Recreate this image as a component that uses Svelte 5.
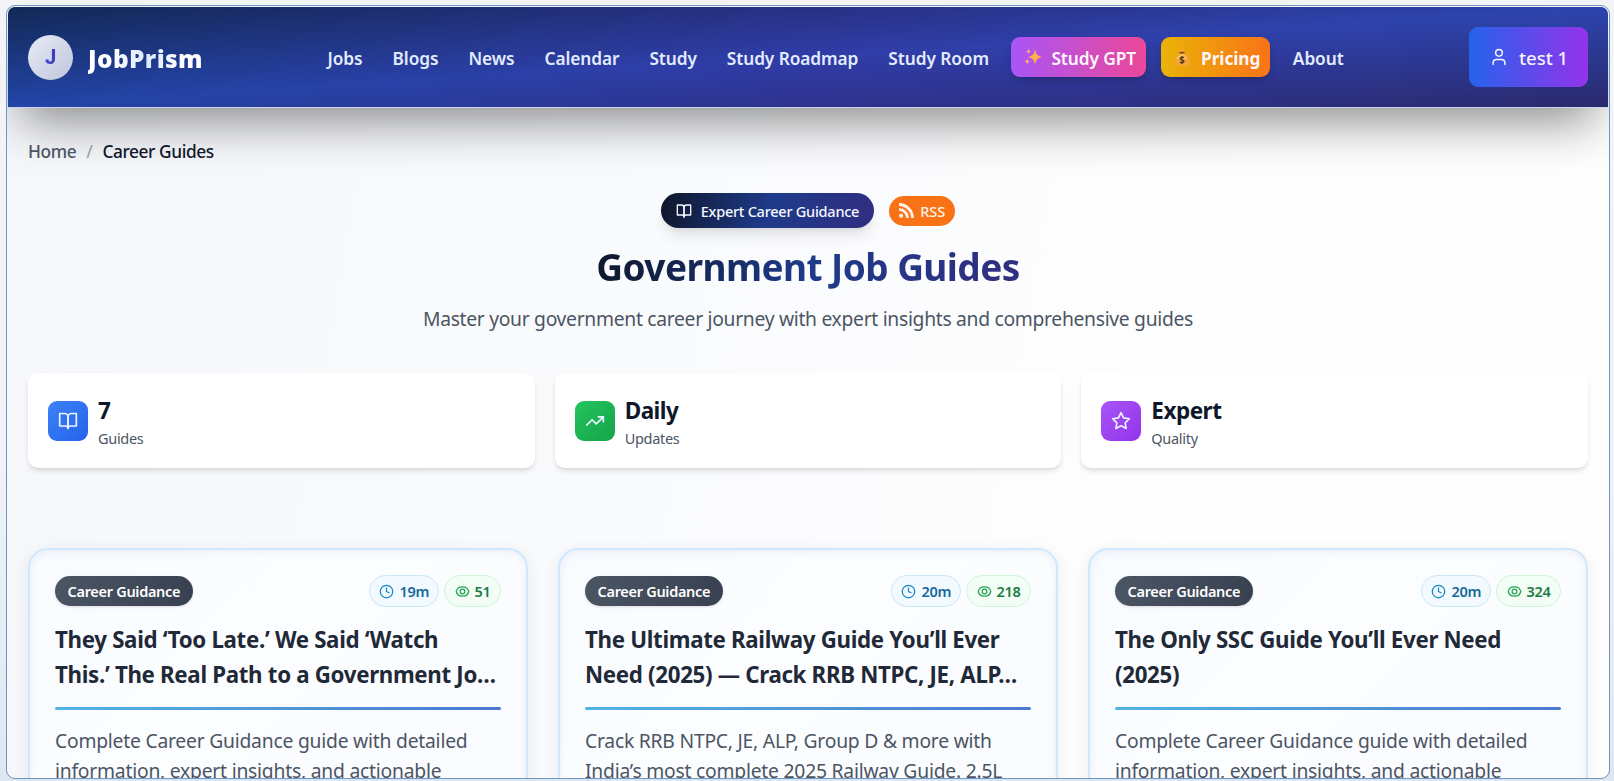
<script lang="ts">
  type Guide = {
    category: string;
    minutes: string;
    views: string;
    title: string[];
    summary: string[];
  };

  const navLinks = ['Jobs', 'Blogs', 'News', 'Calendar', 'Study', 'Study Roadmap', 'Study Room'];

  const stats = [
    { icon: 'book', tone: 'blue', value: '7', label: 'Guides' },
    { icon: 'trend', tone: 'green', value: 'Daily', label: 'Updates' },
    { icon: 'star', tone: 'purple', value: 'Expert', label: 'Quality' }
  ];

  const guides: Guide[] = [
    {
      category: 'Career Guidance',
      minutes: '19m',
      views: '51',
      title: ['They Said ‘Too Late.’ We Said ‘Watch', 'This.’ The Real Path to a Government Jo…'],
      summary: ['Complete Career Guidance guide with detailed', 'information, expert insights, and actionable']
    },
    {
      category: 'Career Guidance',
      minutes: '20m',
      views: '218',
      title: ['The Ultimate Railway Guide You’ll Ever', 'Need (2025) — Crack RRB NTPC, JE, ALP…'],
      summary: ['Crack RRB NTPC, JE, ALP, Group D & more with', 'India’s most complete 2025 Railway Guide. 2.5L']
    },
    {
      category: 'Career Guidance',
      minutes: '20m',
      views: '324',
      title: ['The Only SSC Guide You’ll Ever Need', '(2025)'],
      summary: ['Complete Career Guidance guide with detailed', 'information, expert insights, and actionable']
    }
  ];
</script>

{#snippet icon(name: string, size: number)}
  <svg class="icon" width={size} height={size} viewBox="0 0 24 24" aria-hidden="true">
    {#if name === 'book'}
      <path d="M2 3h6a4 4 0 0 1 4 4v14a3 3 0 0 0-3-3H2z" />
      <path d="M22 3h-6a4 4 0 0 0-4 4v14a3 3 0 0 1 3-3h7z" />
    {:else if name === 'trend'}
      <path d="M22 7l-8.500 8.500-5-5L2 17" />
      <path d="M16 7h6v6" />
    {:else if name === 'star'}
      <path d="M12 2l3.090 6.260L22 9.270l-5 4.870 1.180 6.880L12 17.770l-6.180 3.250L7 14.140 2 9.270l6.910-1.010z" />
    {:else if name === 'clock'}
      <circle cx="12" cy="12" r="10" />
      <path d="M12 6v6l4 2" />
    {:else if name === 'eye'}
      <path d="M2 12c1-4.500 5-7.500 10-7.500s9 3 10 7.500c-1 4.500-5 7.500-10 7.500S3 16.500 2 12z" />
      <circle cx="12" cy="12" r="3.800" />
    {:else if name === 'user'}
      <path d="M19 21v-2a4 4 0 0 0-4-4H9a4 4 0 0 0-4 4v2" />
      <circle cx="12" cy="7" r="4" />
    {/if}
  </svg>
{/snippet}

<div class="page">
  <div class="window">
    <header class="header">
      <a class="brand" href="/">
        <span class="brand-mark"><span>J</span></span>
        <span class="brand-name">JobPrism</span>
      </a>

      <nav class="nav" aria-label="Main">
        {#each navLinks as link}
          <a class="nav-link" href="/">{link}</a>
        {/each}
        <a class="nav-pill gpt" href="/">
          <svg width="18" height="18" viewBox="0 0 18 18" aria-hidden="true">
            <path fill="#ffb04a" d="M11 1c.8 5 2.300 6.800 7 8-4.700 1.200-6.200 3-7 8-.8-5-2.300-6.800-7-8 4.700-1.200 6.200-3 7-8z" />
            <path fill="#ffb56b" d="M4.500.5c.3 2 .9 2.700 2.700 3.100-1.800.4-2.400 1.100-2.700 3.100-.3-2-.9-2.700-2.700-3.100C3.600 3.200 4.200 2.500 4.500.5zM3.200 10.500c.4 2 1 2.700 2.900 3.100-1.900.4-2.500 1.100-2.900 3.100-.4-2-1-2.700-2.900-3.100 1.900-.4 2.500-1.100 2.900-3.100z" />
          </svg>
          <span>Study GPT</span>
        </a>
        <a class="nav-pill pricing" href="/">
          <svg width="16" height="18" viewBox="0 0 16 18" aria-hidden="true">
            <path fill="#f3a53b" d="M5.500 5.500h5c2.500 2 5 5.500 5 8.500 0 2.500-1.500 3.500-3.500 3.500H4C2 17.500.5 16.500.5 14c0-3 2.500-6.500 5-8.500z" />
            <path fill="#f9c05c" d="M6 6.500h4c2 1.500 3 3 3.500 4.500H2.500C3 9.500 4 8 6 6.500z" />
            <path fill="#7a4a1d" d="M5.500 3.800h5v1.700h-5z" />
            <path fill="#f6a53c" d="M5.500 1l1.500.8 1-.8 1 .8 1.500-.8-1 2.800h-3z" />
            <path fill="none" stroke="#5d3a1a" stroke-width="1.300" d="M10 9.800C9 8.700 6.200 8.900 6.200 10.500s3.800 1.200 3.800 2.800-2.900 1.900-4 .7M8 8v8" />
          </svg>
          <span>Pricing</span>
        </a>
        <a class="nav-link" href="/">About</a>
      </nav>

      <button class="user" type="button">
        {@render icon('user', 20)}
        <span>test 1</span>
      </button>
    </header>

    <main class="content">
      <div class="crumbs">
        <a href="/">Home</a>
        <span class="slash">/</span>
        <span class="current">Career Guides</span>
      </div>

      <section class="hero">
        <div class="hero-tags">
          <span class="hero-badge">
            {@render icon('book', 16)}
            <span>Expert Career Guidance</span>
          </span>
          <a class="rss" href="/">
            <svg width="15" height="15" viewBox="0 0 15 15" aria-hidden="true">
              <circle cx="2.200" cy="12.800" r="2.100" fill="currentColor" />
              <path fill="none" stroke="currentColor" stroke-width="2.800" d="M0 6.400A8.600 8.600 0 0 1 8.600 15M0 1.500A13.500 13.500 0 0 1 13.500 15" />
            </svg>
            <span>RSS</span>
          </a>
        </div>
        <h1>Government Job Guides</h1>
        <p>Master your government career journey with expert insights and comprehensive guides</p>
      </section>

      <section class="stats">
        {#each stats as stat}
          <div class="stat">
            <span class="stat-icon {stat.tone}">{@render icon(stat.icon, 20)}</span>
            <div class="stat-text">
              <strong>{stat.value}</strong>
              <span>{stat.label}</span>
            </div>
          </div>
        {/each}
      </section>

      <section class="guides">
        {#each guides as guide}
          <article class="guide">
            <div class="guide-meta">
              <span class="category">{guide.category}</span>
              <div class="counts">
                <span class="count time">{@render icon('clock', 15)}<span>{guide.minutes}</span></span>
                <span class="count views">{@render icon('eye', 15)}<span>{guide.views}</span></span>
              </div>
            </div>
            <h2>
              {#each guide.title as line}<span>{line}</span>{/each}
            </h2>
            <div class="rule"></div>
            <p>
              {#each guide.summary as line}<span>{line}</span>{/each}
            </p>
          </article>
        {/each}
      </section>
    </main>
  </div>
</div>

<style>
  :global(body) {
    font-family: 'Noto Sans', 'Open Sans', sans-serif;
    background: #f1f4f9;
  }

  .page {
    box-sizing: border-box;
    height: 781px;
    padding: 5px 4px 2px 6px;
    overflow: hidden;
    background: linear-gradient(#f3f4f8, #eff2f8 60%, #dde7f3);
  }

  .window {
    box-sizing: border-box;
    width: 1604px;
    height: 774px;
    padding: 1px;
    overflow: hidden;
    border: 1px solid #7396c0;
    border-radius: 9px;
    background: linear-gradient(100deg, #f5f7fa, #fafbfd 45%, #fefefe 75%);
  }

  a {
    color: inherit;
    text-decoration: none;
  }

  .icon {
    flex: none;
    fill: none;
    stroke: currentColor;
    stroke-width: 2;
    stroke-linecap: round;
    stroke-linejoin: round;
  }

  .header {
    position: relative;
    box-sizing: border-box;
    display: flex;
    align-items: center;
    height: 101px;
    padding: 0 20px;
    border-bottom: 1px solid #c9d3ee;
    border-radius: 7px 7px 0 0;
    color: #e3ebff;
    background:
      linear-gradient(to right, rgba(0, 66, 130, 0.22), rgba(58, 40, 145, 0.3) 50%, rgba(49, 60, 150, 0.12)),
      linear-gradient(to bottom right, #16224a, #2c46b2 50%, #292767);
    background-clip: padding-box;
    box-shadow: 0 25px 50px -12px rgba(0, 0, 0, 0.46);
  }

  .brand {
    display: flex;
    align-items: center;
    gap: 15px;
    width: 292px;
  }

  .brand-mark {
    display: grid;
    place-items: center;
    width: 45px;
    height: 45px;
    border-radius: 50%;
    background: linear-gradient(135deg, #e8ebf5, #bfc5dc);
    font-family: Roboto, sans-serif;
    font-size: 20px;
    font-weight: 800;
  }

  .brand-mark span {
    color: transparent;
    background: linear-gradient(100deg, #2f50d8, #4a35b5);
    background-clip: text;
  }

  .brand-name {
    padding-top: 2px;
    color: transparent;
    font-size: 24.500px;
    font-weight: 900;
    letter-spacing: 0.350px;
    background: linear-gradient(90deg, #fff 20%, #dbeafe 50%, #fff 85%);
    background-clip: text;
  }

  .nav {
    display: flex;
    align-items: center;
    gap: 15px;
    font-size: 17.300px;
    font-weight: 600;
    letter-spacing: -0.080px;
    white-space: nowrap;
  }

  .nav-link {
    padding: 2px 7.500px 0;
  }

  .nav-pill {
    display: flex;
    align-items: center;
    gap: 9px;
    height: 40px;
    padding: 0 10px 0 13px;
    border-radius: 9px;
    color: #fff5fb;
    box-shadow: 0 4px 8px -2px rgba(0, 0, 0, 0.25);
  }

  .nav-pill span {
    padding-top: 2px;
  }

  .gpt {
    background: linear-gradient(90deg, #a855f7, #ec4899);
  }

  .pricing {
    gap: 11px;
    font-weight: 700;
    background: linear-gradient(90deg, #eab308, #f97316);
  }

  .user {
    display: flex;
    align-items: center;
    gap: 10px;
    width: 119px;
    height: 60px;
    margin-left: auto;
    padding: 0 0 0 20px;
    border: 0;
    border-radius: 9px;
    color: #f4f3ff;
    background: linear-gradient(90deg, #2563eb, #9333ea);
    font-family: inherit;
    font-size: 18.500px;
    font-weight: 500;
    white-space: nowrap;
  }

  .user .icon {
    stroke-width: 1.800;
  }

  .content {
    padding: 30px 20px 0;
  }

  .crumbs {
    position: relative;
    display: flex;
    gap: 10px;
    height: 28px;
    line-height: 28px;
    color: #4b5563;
    font-size: 17.300px;
    font-weight: 500;
    letter-spacing: -0.400px;
  }

  .slash {
    color: #9ca3af;
  }

  .current {
    color: #0f172a;
  }

  .hero {
    display: flex;
    flex-direction: column;
    align-items: center;
    margin-top: 27px;
  }

  .hero-tags {
    display: flex;
    align-items: center;
    gap: 15px;
  }

  .hero-badge,
  .rss {
    display: flex;
    align-items: center;
    font-size: 14.500px;
    font-weight: 500;
    letter-spacing: -0.250px;
    white-space: nowrap;
  }

  .hero-badge {
    gap: 9px;
    height: 35px;
    padding: 0 15px;
    border-radius: 18px;
    color: #f5f8ff;
    background: linear-gradient(100deg, #0f172a, #1e3a8a 50%, #312e81);
    box-shadow: 0 10px 15px -3px rgba(0, 0, 0, 0.1), 0 4px 6px -4px rgba(0, 0, 0, 0.1);
  }

  .rss {
    gap: 6px;
    height: 30px;
    padding: 0 10px;
    border-radius: 15px;
    color: #fff3e8;
    background: #f97316;
    letter-spacing: 0;
  }

  h1 {
    margin: 16px 0 0;
    color: transparent;
    font-size: 37px;
    font-weight: 700;
    line-height: 46px;
    letter-spacing: -0.560px;
    white-space: nowrap;
    background: linear-gradient(100deg, #0f172a, #1e3a8a 50%, #312e81);
    background-clip: text;
  }

  .hero p {
    margin: 14px 0 0;
    color: #4b5563;
    font-size: 19.300px;
    line-height: 30px;
    letter-spacing: -0.300px;
    white-space: nowrap;
  }

  .stats {
    display: grid;
    grid-template-columns: repeat(3, 1fr);
    gap: 20px;
    margin-top: 39px;
  }

  .stat {
    box-sizing: border-box;
    display: flex;
    align-items: center;
    gap: 10px;
    height: 95px;
    padding: 1px 20px 0;
    border-radius: 10px;
    background: #fff;
    box-shadow: 0 4px 6px -1px rgba(0, 0, 0, 0.1), 0 2px 4px -2px rgba(0, 0, 0, 0.1);
  }

  .stat-icon {
    display: grid;
    place-items: center;
    width: 40px;
    height: 40px;
    border-radius: 9px;
    color: #edf4ff;
  }

  .blue {
    background: linear-gradient(135deg, #3b82f6, #2563eb);
  }

  .green {
    background: linear-gradient(135deg, #22c55e, #16a34a);
  }

  .purple {
    background: linear-gradient(135deg, #a855f7, #9333ea);
  }

  .stat-text {
    display: flex;
    flex-direction: column;
    padding-top: 2px;
  }

  .stat-text strong {
    color: #0f172a;
    font-size: 22.500px;
    font-weight: 700;
    line-height: 32px;
    letter-spacing: -0.500px;
  }

  .stat-text span {
    color: #4b5563;
    font-size: 14.500px;
    line-height: 23px;
    letter-spacing: -0.300px;
  }

  .guides {
    display: grid;
    grid-template-columns: repeat(3, 1fr);
    gap: 30px;
    margin-top: 80px;
  }

  .guide {
    box-sizing: border-box;
    min-width: 0;
    height: 420px;
    padding: 25px;
    border: 2px solid #cfe8fb;
    border-radius: 20px;
    background: linear-gradient(135deg, #f8fcff, #fcfdff 40%, #f9fafe);
    box-shadow: 0 4px 16px rgba(30, 41, 80, 0.08), inset 0 2px 8px rgba(80, 110, 190, 0.1);
  }

  .guide-meta,
  .counts,
  .count {
    display: flex;
    align-items: center;
  }

  .guide-meta {
    justify-content: space-between;
    height: 32px;
    font-size: 14.500px;
    letter-spacing: -0.300px;
  }

  .category {
    box-sizing: border-box;
    height: 30px;
    padding: 0 12.500px;
    border-radius: 15px;
    color: #fff;
    background: linear-gradient(100deg, #4b5563, #374151);
    box-shadow: 0 1px 3px rgba(0, 0, 0, 0.12);
    font-weight: 600;
    line-height: 30px;
  }

  .counts {
    gap: 5px;
  }

  .count {
    box-sizing: border-box;
    gap: 5px;
    height: 32px;
    padding: 0 9px;
    border: 1px solid;
    border-radius: 16px;
    font-weight: 600;
  }

  .time {
    color: #17689a;
    border-color: #c9e9fa;
    background: #f3faff;
  }

  .time .icon {
    color: #1688c4;
  }

  .views {
    padding: 0 9.500px;
    color: #1c7a43;
    border-color: #cdf5da;
    background: #f2fdf5;
  }

  .views .icon {
    color: #27a257;
  }

  h2,
  .guide p {
    margin: 15px 0 0;
    white-space: nowrap;
  }

  h2 {
    color: #1f2937;
    font-size: 22.300px;
    font-weight: 700;
    line-height: 35px;
    letter-spacing: -0.320px;
  }

  h2 span,
  .guide p span {
    display: block;
  }

  .rule {
    height: 3px;
    margin-top: 15px;
    border-radius: 2px;
    background: linear-gradient(90deg, #52b4e3, #4a7bd0);
  }

  .guide p {
    margin-top: 16px;
    color: #4b5563;
    font-size: 19.300px;
    line-height: 30px;
    letter-spacing: -0.220px;
  }
</style>
